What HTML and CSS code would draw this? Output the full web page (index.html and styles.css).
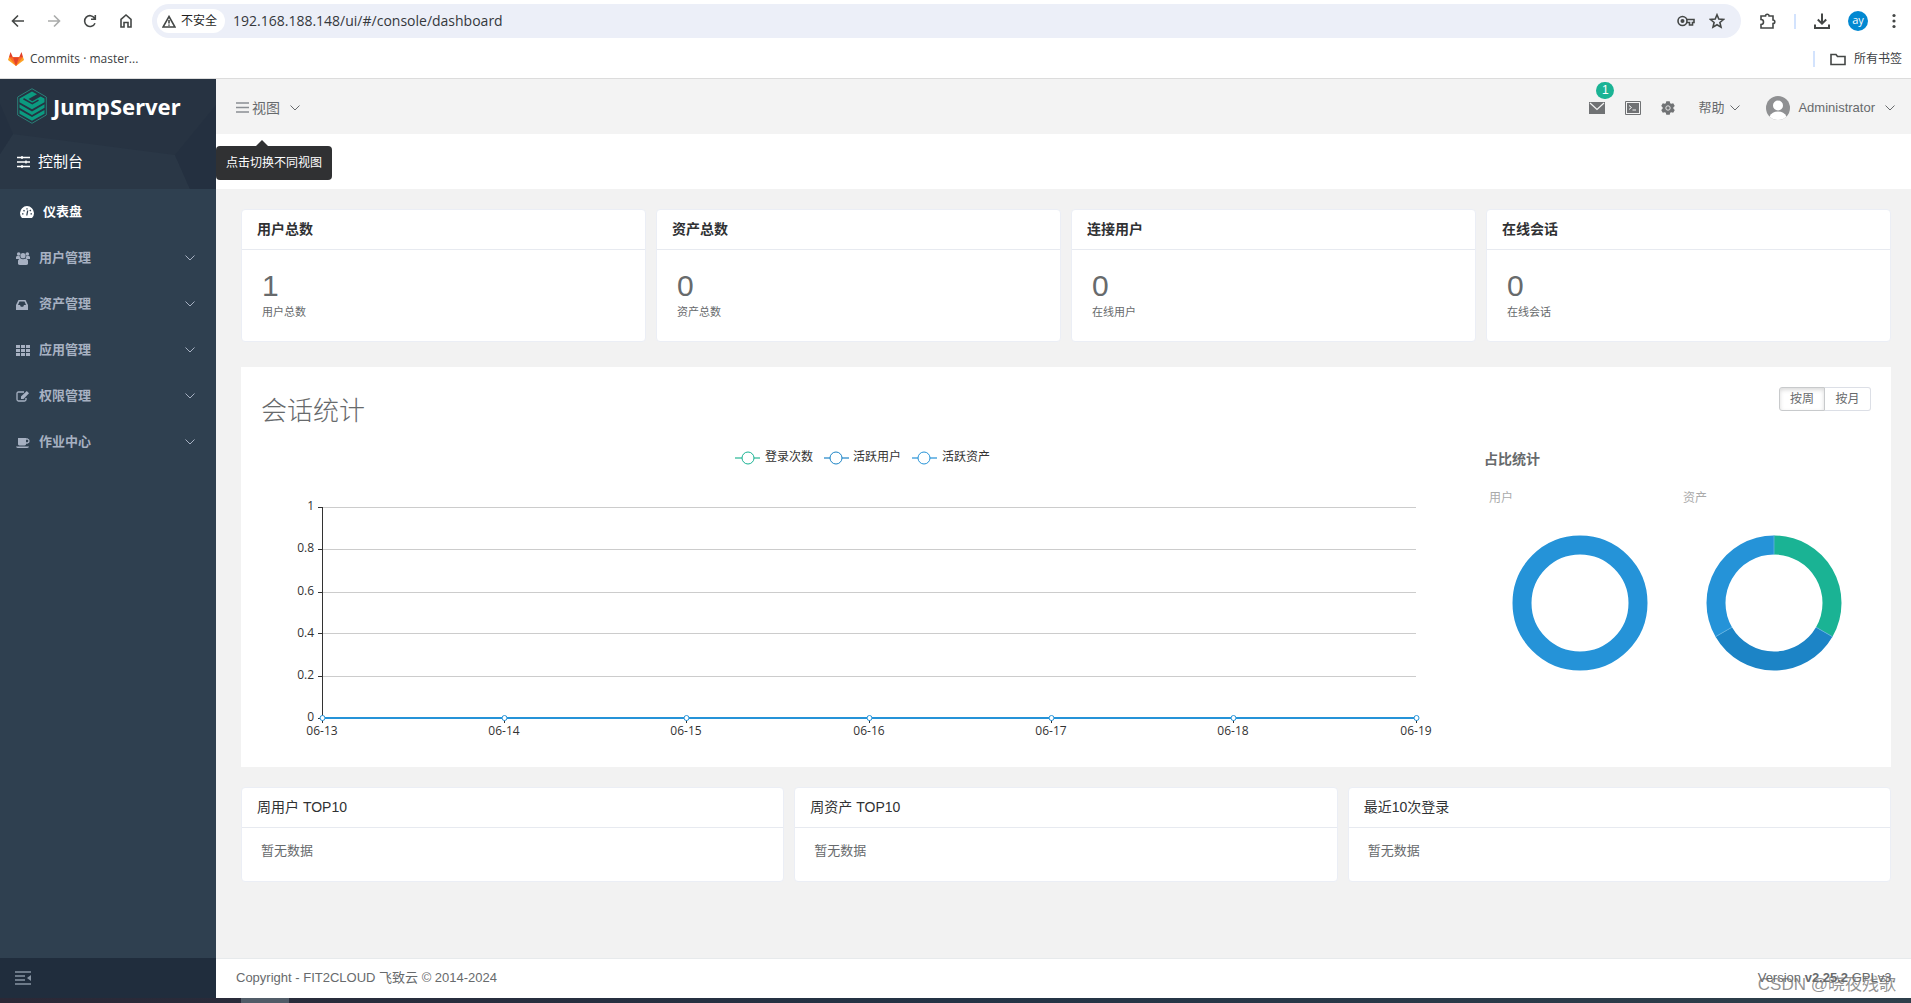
FILE: index.html
```html
<!DOCTYPE html>
<html lang="zh-CN">
<head>
<meta charset="utf-8">
<title>JumpServer</title>
<link rel="stylesheet" href="styles.css">
</head>
<body>
<svg width="0" height="0" class="defs" aria-hidden="true">
  <symbol id="chev" viewBox="0 0 10 6"><path d="M.5.5 5 5 9.500.5" fill="none" stroke="currentColor"/></symbol>
</svg>
<div class="browser">
  <div class="toolbar">
    <div class="nav-buttons">
      <button type="button" aria-label="Back"><svg width="16" height="16" viewBox="0 0 16 16"><path d="M14 8H3M8 2.500 2.500 8 8 13.500" class="ln"/></svg></button>
      <button type="button" aria-label="Forward" class="dim"><svg width="16" height="16" viewBox="0 0 16 16"><path d="M2 8h11M8 2.500 13.500 8 8 13.500" class="ln"/></svg></button>
      <button type="button" aria-label="Reload"><svg width="16" height="16" viewBox="0 0 16 16"><path d="M13 10.200A5.400 5.400 0 1 1 12.600 5.200M13.300 2v4.200H9" class="ln"/></svg></button>
      <button type="button" aria-label="Home"><svg width="16" height="16" viewBox="0 0 16 16"><path d="M3 6.300 8 2l5 4.300V14h-3V9.500H6V14H3z" class="ln"/></svg></button>
    </div>
    <div class="omnibox">
      <button type="button" class="chip"><svg width="14" height="13" viewBox="0 0 14 13"><path d="M7 1.500 13 12H1z" class="ln"/><path d="M7 5v3.500M7 9.500v1.300" class="ln"/></svg>不安全</button>
      <input type="text" class="url" aria-label="Address" value="192.168.188.148/ui/#/console/dashboard">
      <svg width="18" height="12" viewBox="0 0 18 12"><circle cx="5.500" cy="6" r="4.500" class="ln"/><circle cx="5.500" cy="6" r="2" fill="#444746"/><path d="M9.800 4.500H17v3h-1.500V10h-3V7.500H9.800" class="ln"/></svg>
      <svg width="16" height="16" viewBox="0 0 16 16"><path d="m8 1.800 1.800 4.300 4.700.4-3.600 3 1.100 4.600L8 11.700 4 14.100l1.100-4.600-3.600-3 4.700-.4z" class="ln"/></svg>
    </div>
    <div class="tools">
      <svg width="18" height="18" viewBox="0 0 18 18"><path d="M2 4h4.500a1.800 1.800 0 0 1 3.600 0H14v4a1.800 1.800 0 0 1 0 3.600V16H2v-3.500a2.500 2.500 0 0 0 0-5z" class="ln"/></svg>
      <i class="bar"></i>
      <svg width="18" height="18" viewBox="0 0 18 18"><path d="M9 1.500v10M4.800 7.500 9 11.700l4.200-4.200M2 12.500V16h14v-3.500" class="ln wide"/></svg>
      <span class="profile">ay</span>
      <svg class="more" width="4" height="16" viewBox="0 0 4 16"><g fill="#444746"><circle cx="2" cy="2.500" r="1.600"/><circle cx="2" cy="8" r="1.600"/><circle cx="2" cy="13.500" r="1.600"/></g></svg>
    </div>
  </div>
  <div class="bookmarks">
    <a href="#"><svg width="16" height="16" viewBox="0 0 16 16"><path fill="#fca326" d="M8 15 0 9l1-3h14l1 3z"/><path fill="#fc6d26" d="M8 15 1 6h14z"/><path fill="#e24329" d="M8 15 5 6.500h6zM1 6l1.500-5 2.500 5.500zM15 6l-1.500-5L11 6.500z"/></svg>Commits · master...</a>
    <a href="#" class="all"><svg width="16" height="13" viewBox="0 0 16 13"><path d="M1 1.500h5l1.500 2H15v8H1z" class="ln"/></svg>所有书签</a>
  </div>
</div>

<div class="app">
  <aside class="sidebar">
    <div class="brand">
      <svg class="facets" viewBox="0 0 216 110" preserveAspectRatio="none"><path fill="#2a3746" d="M13 55 175 76l15 34H0V75z"/><path fill="#243040" d="M0 25 13 55 0 75zM216 26v84h-26l-15-34z"/></svg>
      <a href="#" class="logo"><svg width="30" height="36" viewBox="0 0 30 36"><path d="M15 .7 29.300 9v18L15 35.300.7 27V9z" fill="#263342" stroke="#2a8078"/><path fill="#0b9b80" d="M2.500 10.500 15 3.500l5 2.700-8.500 4.900 3.800 2.200L23.700 8.400l3.800 2.100v3.700L15 21.300 2.500 14.200z"/><path fill="#0b9b80" d="M2.500 16.300 15 23.400l12.500-7.100v3.500L15 27 2.500 19.800zM2.500 22 15 29.100 27.500 22v3.800L15 32.800 2.500 25.800z"/><path d="m6.500 10.700 8.800 5 6.200-3.600M15.500 10.700l5-2.800" fill="none" stroke="#263342" stroke-width="1.600"/></svg><span>JumpServer</span></a>
      <a href="#" class="console"><svg width="13" height="12" viewBox="0 0 13 12"><path d="M0 1.500h13M0 6h13M0 10.500h13M5 0v3M9 4.500v3M5 9v3" fill="none" stroke="currentColor" stroke-width="1.400"/></svg>控制台</a>
    </div>
    <nav>
      <a href="#" class="on"><svg width="14" height="14" viewBox="0 0 14 14"><path fill="currentColor" d="M2 13a7 7 0 1 1 10 0z"/><path stroke="#2f4050" stroke-width="1.300" d="m6.800 10.500.9-5M2 8.800h1.500M10.500 8.800H12M3.500 5.200l1 1M9.800 6l1-1M7 3.200v1.300"/></svg><span>仪表盘</span></a>
      <a href="#"><svg width="14" height="14" viewBox="0 0 14 14"><g fill="currentColor"><circle cx="2.700" cy="3" r="1.800"/><circle cx="11.300" cy="3" r="1.800"/><circle cx="7" cy="4.700" r="2.600"/><path d="M0 8V6q1-2 3.800-.7Q4 7 5 8zM14 8V6q-1-2-3.800-.7Q10 7 9 8zM2 13V9.500Q3 7.500 4.500 7.500q2.500 1.500 5 0 1.500 0 2.500 2V13q-.5 1-2 1h-6q-1.500 0-2-1z"/></g></svg><span>用户管理</span><svg class="chev"><use href="#chev"/></svg></a>
      <a href="#"><svg width="14" height="14" viewBox="0 0 14 14"><path fill="currentColor" fill-rule="evenodd" d="M2.500 3h7l2.500 5v5H0V8zm1 1.500L2 8h2l.8 1.700h2.400L8 8h2L8.500 4.500z"/></svg><span>资产管理</span><svg class="chev"><use href="#chev"/></svg></a>
      <a href="#"><svg width="14" height="14" viewBox="0 0 14 14"><path stroke="currentColor" stroke-width="2.800" stroke-dasharray="4 1" d="M0 3.500h14M0 7.500h14M0 11.500h14"/></svg><span>应用管理</span><svg class="chev"><use href="#chev"/></svg></a>
      <a href="#"><svg width="14" height="14" viewBox="0 0 14 14"><path fill="none" stroke="currentColor" stroke-width="1.300" d="M8 3H2.500Q1 3 1 4.500v6Q1 12 2.500 12h6q1.500 0 1.500-1.500V9"/><path fill="currentColor" d="M5 10V7.500L10.800 2 13 4.200 7.500 10z"/></svg><span>权限管理</span><svg class="chev"><use href="#chev"/></svg></a>
      <a href="#"><svg width="14" height="14" viewBox="0 0 14 14"><path fill="currentColor" d="M2 3h8v6.500q-.5 1-1.500 1h-5q-1 0-1.500-1zM0 11.500h13q-.5 1.500-2 1.500H2q-1.500 0-2-1.500z"/><path fill="none" stroke="currentColor" stroke-width="1.300" d="M10 4h1.500q1.500.5 1.500 2t-1.500 2H10"/></svg><span>作业中心</span><svg class="chev"><use href="#chev"/></svg></a>
    </nav>
    <button type="button" class="collapse" aria-label="Collapse"><svg width="16" height="14" viewBox="0 0 16 14"><path d="M0 1h16M0 5h10M0 9h10M0 13h16" stroke="#8794a3" stroke-width="1.600"/><path d="M16 4v6l-4-3z" fill="#8794a3"/></svg></button>
  </aside>

  <div class="page">
    <header>
      <button type="button" class="views"><svg width="13" height="11" viewBox="0 0 13 11"><path d="M0 1h13M0 5.500h13M0 10h13" stroke="#8b8f94" stroke-width="1.600"/></svg>视图<svg class="chev"><use href="#chev"/></svg><span class="tip" role="tooltip">点击切换不同视图</span></button>
      <div class="actions">
        <button type="button" class="mail" aria-label="Messages"><svg width="16" height="12" viewBox="0 0 16 12"><path fill="#707274" d="M0 0h16v12H0z"/><path d="m1 1 7 6.500L15 1" fill="none" stroke="#f3f3f3" stroke-width="1.200"/></svg><b>1</b></button>
        <button type="button" aria-label="Terminal"><svg width="16" height="14" viewBox="0 0 16 14"><path d="M.5.500h15v13H.5z" fill="none" stroke="#707274"/><path fill="#707274" d="M2 2h12v10H2z"/><path d="m4 4.500 2.500 2L4 8.500M7.500 9H11" fill="none" stroke="#f3f3f3"/></svg></button>
        <button type="button" aria-label="Settings"><svg width="14" height="14" viewBox="0 0 14 14"><path fill="#707274" d="M5.300.3h3.400l.5 1.900 1 .6 2-.6 1.600 2.700-1.400 1.400v1.400l1.400 1.400-1.600 2.700-2-.6-1 .6-.5 1.900H5.300l-.5-1.900-1-.6-2 .6L.2 9.100l1.400-1.400V6.300L.2 4.900l1.600-2.700 2 .6 1-.6z"/><circle cx="7" cy="7" r="2.200" fill="none" stroke="#e4e4e4"/></svg></button>
        <button type="button" class="help">帮助<svg class="chev"><use href="#chev"/></svg></button>
        <button type="button" class="user"><svg width="24" height="24" viewBox="0 0 24 24"><circle cx="12" cy="12" r="12" fill="#8f9092"/><circle cx="12" cy="9.500" r="5" fill="#fff"/><path d="M3.500 20.500Q6 15.500 12 15.500t8.500 5Q17 24 12 24t-8.500-3.500z" fill="#fff"/></svg><span>Administrator</span><svg class="chev"><use href="#chev"/></svg></button>
      </div>
    </header>
    <div class="heading"></div>

    <main>
      <section class="stats">
        <article class="card"><h3>用户总数</h3><div><strong>1</strong><small>用户总数</small></div></article>
        <article class="card"><h3>资产总数</h3><div><strong>0</strong><small>资产总数</small></div></article>
        <article class="card"><h3>连接用户</h3><div><strong>0</strong><small>在线用户</small></div></article>
        <article class="card"><h3>在线会话</h3><div><strong>0</strong><small>在线会话</small></div></article>
      </section>

      <section class="panel">
        <div class="panel-head">
          <h2>会话统计</h2>
          <div class="range"><button type="button" class="active">按周</button><button type="button">按月</button></div>
        </div>
        <div class="panel-body">
          <svg class="chart" viewBox="0 0 1222 310">
            <g stroke-width="2" fill="#fff">
              <path d="M473 18h25" stroke="#7dd3bf"/><circle cx="486" cy="18" r="6" stroke="#1ab394" stroke-width="1"/>
              <path d="M562 18h25" stroke="#77b5de"/><circle cx="574" cy="18" r="6" stroke="#1c84c6" stroke-width="1"/>
              <path d="M650 18h25" stroke="#7cbde7"/><circle cx="662" cy="18" r="6" stroke="#2593d8" stroke-width="1"/>
            </g>
            <g class="lbl"><text x="503" y="21">登录次数</text><text x="591" y="21">活跃用户</text><text x="680" y="21">活跃资产</text></g>
            <path d="M60 67.500h1094M60 109.500h1094M60 152.500h1094M60 193.500h1094M60 236.500h1094" fill="none" stroke="#ccc"/>
            <path d="M60.500 67v212M56 67.500h5M56 109.500h5M56 152.500h5M56 193.500h5M56 236.500h5M56 278.500h5M60.500 278v5M242.500 278v5M424.500 278v5M607.500 278v5M789.500 278v5M971.500 278v5M1154.500 278v5" fill="none" stroke="#333"/>
            <path d="M60 278h1094" stroke="#2593d8" stroke-width="2"/>
            <g fill="#fff" stroke="#2593d8"><circle cx="60.500" cy="278" r="2.500"/><circle cx="242.500" cy="278" r="2.500"/><circle cx="424.500" cy="278" r="2.500"/><circle cx="607.500" cy="278" r="2.500"/><circle cx="789.500" cy="278" r="2.500"/><circle cx="971.500" cy="278" r="2.500"/><circle cx="1154.500" cy="278" r="2.500"/></g>
            <g class="lbl end"><text x="52" y="70">1</text><text x="52" y="112">0.8</text><text x="52" y="155">0.6</text><text x="52" y="197">0.4</text><text x="52" y="239">0.2</text><text x="52" y="281">0</text></g>
            <g class="lbl mid"><text x="60" y="295">06-13</text><text x="242" y="295">06-14</text><text x="424" y="295">06-15</text><text x="607" y="295">06-16</text><text x="789" y="295">06-17</text><text x="971" y="295">06-18</text><text x="1154" y="295">06-19</text></g>
          </svg>
          <div class="ratio">
            <h4>占比统计</h4>
            <div class="pies">
              <figure><figcaption>用户</figcaption><svg viewBox="0 0 136 136"><circle cx="68" cy="68" r="58" fill="none" stroke="#2593d8" stroke-width="19"/></svg></figure>
              <figure><figcaption>资产</figcaption><svg viewBox="0 0 136 136"><g fill="none" stroke-width="19"><path d="M68 10A58 58 0 0 1 118.230 97" stroke="#1ab394"/><path d="M118.230 97A58 58 0 0 1 17.770 97" stroke="#1c84c6"/><path d="M17.770 97A58 58 0 0 1 68 10" stroke="#2593d8"/></g><path d="M68 .5v19M110 92.200l16.500 9.500M26 92.200 9.500 101.700" stroke="#62b2e0" stroke-width=".8"/></svg></figure>
            </div>
          </div>
        </div>
      </section>

      <section class="tops">
        <article class="card"><h3>周用户 TOP10</h3><p>暂无数据</p></article>
        <article class="card"><h3>周资产 TOP10</h3><p>暂无数据</p></article>
        <article class="card"><h3>最近10次登录</h3><p>暂无数据</p></article>
      </section>
    </main>

    <footer>
      <span>Copyright - FIT2CLOUD 飞致云 © 2014-2024</span>
      <span>Version <b>v2.25.2</b> GPLv3.</span>
      <span class="watermark">CSDN @晓夜残歌</span>
    </footer>
  </div>
</div>
<div class="taskbar"><i></i></div>
</body>
</html>
```
FILE: styles.css
```css
* { box-sizing: border-box; }
body {
  margin: 0;
  min-height: 100vh;
  display: flex;
  flex-direction: column;
  background: #f2f2f2;
  color: #676a6c;
  font: 13px/20px "Liberation Sans", "Noto Sans CJK SC", sans-serif;
}
button { padding: 0; border: 0; background: none; color: inherit; font: inherit; }
a { color: inherit; text-decoration: none; }
h2, h3, h4, p, figure { margin: 0; }
svg { display: block; flex: none; }
.defs { position: absolute; }
.chev { width: 10px; height: 6px; }

/* browser frame */
.browser { background: #fff; border-bottom: 1px solid #dcdcdc; color: #3c4043; font-family: "Open Sans", "Noto Sans CJK SC", sans-serif; }
.ln { fill: none; stroke: #444746; stroke-width: 1.600; }
.wide { stroke-width: 2; }
.toolbar { display: flex; align-items: center; height: 42px; padding: 0 15px 0 10px; }
.nav-buttons { display: flex; gap: 20px; width: 142px; }
.dim { opacity: .45; }
.omnibox { flex: 1; display: flex; align-items: center; gap: 14px; height: 34px; padding: 0 16px 0 5px; border-radius: 17px; background: #eceff8; }
.chip { display: flex; align-items: center; gap: 5px; height: 24px; padding: 0 8px 0 5px; border-radius: 12px; background: #fff; color: #1f1f1f; font-size: 12px; }
.url { flex: 1; margin-left: -6px; padding: 0; border: 0; background: none; color: #35383c; font: 14px/20px "Open Sans", sans-serif; }
.tools { display: flex; align-items: center; gap: 17px; margin-left: 18px; }
.more { margin-left: 7px; }
.bar { width: 2px; height: 15px; background: #d3e3fd; }
.profile { width: 20px; height: 20px; border-radius: 50%; background: #0288d1; color: #fff; font-size: 11px; line-height: 18px; text-align: center; }
.bookmarks { display: flex; justify-content: space-between; height: 36px; padding: 9px 9px 0 8px; font-size: 12px; line-height: 16px; }
.bookmarks a { display: flex; align-items: center; gap: 6px; height: 16px; }
.bookmarks .all { gap: 8px; padding-left: 15px; border-left: 2px solid #d3e3fd; }

/* sidebar */
.app { flex: 1; display: flex; }
.sidebar { width: 216px; flex: none; display: flex; flex-direction: column; background: #2f4050; color: #a7b1c2; }
.brand { position: relative; height: 110px; background: #273342; }
.facets { position: absolute; inset: 0; width: 100%; height: 100%; }
.brand a { position: relative; display: flex; align-items: center; color: #fff; }
.logo { gap: 6px; padding: 9px 0 0 17px; font: bold 22px/34px "Noto Sans", sans-serif; }
.console { gap: 8px; padding: 28px 0 0 17px; font-size: 15px; }
nav { flex: 1; }
nav a { display: flex; align-items: center; gap: 9px; height: 46px; padding: 0 21px 0 16px; font-weight: bold; }
nav .on { padding-left: 20px; color: #fff; }
nav .chev { margin-left: auto; }
.collapse { height: 40px; padding-left: 15px; background: #202d3d; }

/* top bar */
.page { flex: 1; min-width: 0; display: flex; flex-direction: column; }
header { display: flex; justify-content: space-between; align-items: center; height: 55px; padding: 2px 16px 0 20px; background: #f3f3f3; }
header button { display: flex; align-items: center; }
.views { position: relative; gap: 3px; font-size: 14px; }
.views .chev { margin-left: 7px; }
.tip { position: absolute; left: -20px; top: 49px; margin-top: -1px; padding: 7px 10px; border-radius: 4px; background: #303133; color: #fff; font-size: 12px; white-space: nowrap; }
.tip::before { content: ""; position: absolute; left: 40px; top: -6px; border: 6px solid transparent; border-top: 0; border-bottom-color: #303133; }
.actions { display: flex; align-items: center; gap: 20px; }
.mail { position: relative; }
.mail b { position: absolute; left: 7px; top: -20px; width: 18px; height: 17px; border-radius: 9px; background: #1ab394; color: #fff; font-size: 12px; font-weight: normal; line-height: 17px; }
.help { gap: 6px; margin-left: 3px; }
.user { gap: 8px; margin-left: 6px; }
.user .chev { margin-left: 2px; }
.heading { height: 55px; background: #fff; }

/* dashboard */
main { flex: 1; display: flex; flex-direction: column; padding: 20px 20px 0 25px; }
.stats, .tops { display: grid; grid-template-columns: repeat(4, 1fr); gap: 10px; }
.card { border: 1px solid #ebeef5; border-radius: 4px; background: #fff; }
.card h3 { height: 40px; padding: 0 15px; border-bottom: 1px solid #e7eaf0; color: #303133; font-size: 14px; line-height: 38px; }
.card div { display: flex; flex-direction: column; height: 91px; padding: 20px 20px 0; }
.card strong { font-size: 30px; font-weight: normal; line-height: 32px; }
.card small { font-size: 11px; line-height: 20px; }
.panel { margin: 25px 0 20px; background: #fff; }
.panel-head { display: flex; justify-content: space-between; align-items: flex-start; height: 73px; padding: 20px 20px 0; }
h2 { font-size: 26px; font-weight: 300; line-height: 48px; }
.range { display: flex; }
.range button { width: 46px; height: 24px; border: 1px solid #dcdfe6; border-radius: 0 3px 3px 0; font-size: 12px; }
.range .active { border-color: #c8cacc; border-radius: 3px 0 0 3px; box-shadow: inset 0 2px 4px rgba(0, 0, 0, .15); }
.range button + button { border-left: 0; }
.panel-body { display: flex; padding: 0 20px 17px 21px; }
.chart { flex: 1; min-width: 0; }
.lbl { fill: #333; font-size: 12px; }
.end, .mid { font-family: "Open Sans", sans-serif; }
.end { text-anchor: end; }
.mid { text-anchor: middle; }
.ratio { width: 387px; padding-top: 9px; }
h4 { font-size: 14px; }
.pies { display: flex; padding: 19px 0 0 5px; }
figure { flex: none; width: 194px; }
figcaption { color: #aaa; font-size: 12px; }
figure svg { width: 136px; margin: 27px 0 0 23px; }
.tops { grid-template-columns: repeat(3, 1fr); }
.tops h3 { font-weight: normal; }
.tops p { height: 53px; padding: 13px 19px; }

footer { position: relative; display: flex; justify-content: space-between; height: 40px; padding: 0 16px 0 20px; border-top: 1px solid #e7eaec; background: #fff; line-height: 38px; }
.watermark { position: absolute; right: 15px; top: 14px; color: rgba(110, 110, 110, .75); font-size: 17px; line-height: 24px; }
.taskbar { height: 5px; padding-left: 241px; background: linear-gradient(90deg, #2b2836, #233345 50%, #2e3f4b); }
.taskbar i { display: block; width: 48px; height: 5px; background: #515c68; }
```
